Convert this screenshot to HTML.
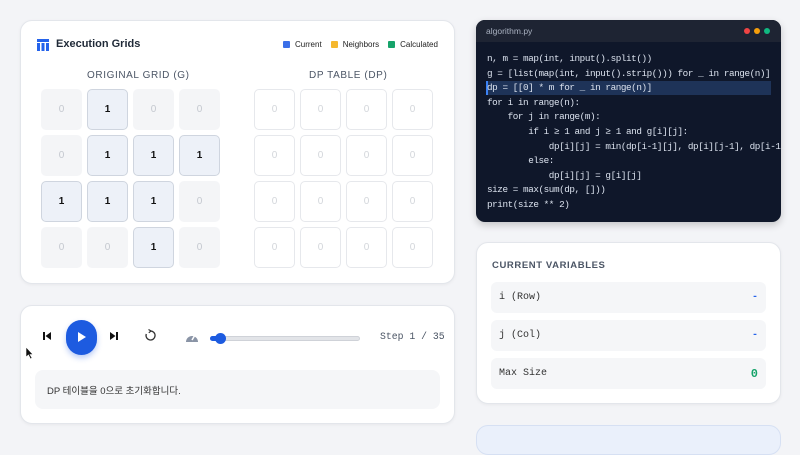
<!DOCTYPE html>
<html><head><meta charset="utf-8"><style>
*{box-sizing:border-box;margin:0;padding:0}
body{width:800px;height:435px;overflow:hidden;background:#f3f4f7;font-family:"Liberation Sans","Noto Sans CJK KR",sans-serif;position:relative}
.card{position:absolute;background:#fff;border:1px solid #e3e6eb;border-radius:12px;box-shadow:0 1px 3px rgba(0,0,0,.05)}
.cell{position:absolute;width:41px;height:41px;border-radius:5px;display:flex;align-items:center;justify-content:center;font-size:10px;font-weight:bold}
.z{background:#f4f5f7;color:#c4c8cf;font-weight:normal}
.o{background:#edf1f8;border:1px solid #cfd5df;color:#111}
.d{background:#fff;border:1px solid #e6e8ec;color:#d3d6db;font-weight:normal}
.lbl{position:absolute;font-size:10px;letter-spacing:.6px;color:#4b5565;top:70px}
.code{position:absolute;left:476px;top:20px;width:305px;height:202px;background:#0f172a;border-radius:9px;overflow:hidden;box-shadow:0 3px 8px rgba(0,0,0,.2)}
.code pre{position:absolute;left:11px;top:32px;font-family:"Liberation Mono",monospace;font-size:9.3px;letter-spacing:-0.43px;line-height:14.6px;color:#dbe2ee;white-space:pre}
.var{position:absolute;left:491px;width:275px;height:31px;background:#f5f6f8;border-radius:6px;font-family:"Liberation Mono",monospace;font-size:10px;color:#333;padding:0 8px;display:flex;align-items:center;justify-content:space-between}
</style></head><body>
<div class="card" style="left:20px;top:20px;width:435px;height:264px"></div>
<svg style="position:absolute;left:37px;top:39px" width="12" height="12" viewBox="0 0 12 12"><rect x="0" y="0" width="12" height="3" fill="#2563eb"/><rect x="0" y="4" width="3" height="8" fill="#2563eb"/><rect x="4.5" y="4" width="3" height="8" fill="#2563eb"/><rect x="9" y="4" width="3" height="8" fill="#2563eb"/></svg>
<div style="position:absolute;left:56px;top:38px;font-size:11px;font-weight:bold;color:#1f2937">Execution Grids</div>
<div style="position:absolute;left:283px;top:40px;font-size:8px;color:#222;display:flex;gap:5px;align-items:center">
<span style="width:7px;height:7px;background:#3b6fe8;border-radius:1px;display:inline-block"></span>Current
<span style="width:7px;height:7px;background:#f5b82e;border-radius:1px;display:inline-block;margin-left:4px"></span>Neighbors
<span style="width:7px;height:7px;background:#16a36a;border-radius:1px;display:inline-block;margin-left:4px"></span>Calculated</div>
<div class="lbl" style="left:87px">ORIGINAL GRID (G)</div>
<div class="lbl" style="left:309px">DP TABLE (DP)</div>
<div class="cell z" style="left:41px;top:89px">0</div><div class="cell o" style="left:87px;top:89px">1</div><div class="cell z" style="left:133px;top:89px">0</div><div class="cell z" style="left:179px;top:89px">0</div>
<div class="cell z" style="left:41px;top:135px">0</div><div class="cell o" style="left:87px;top:135px">1</div><div class="cell o" style="left:133px;top:135px">1</div><div class="cell o" style="left:179px;top:135px">1</div>
<div class="cell o" style="left:41px;top:181px">1</div><div class="cell o" style="left:87px;top:181px">1</div><div class="cell o" style="left:133px;top:181px">1</div><div class="cell z" style="left:179px;top:181px">0</div>
<div class="cell z" style="left:41px;top:227px">0</div><div class="cell z" style="left:87px;top:227px">0</div><div class="cell o" style="left:133px;top:227px">1</div><div class="cell z" style="left:179px;top:227px">0</div>
<div class="cell d" style="left:254px;top:89px">0</div><div class="cell d" style="left:300px;top:89px">0</div><div class="cell d" style="left:346px;top:89px">0</div><div class="cell d" style="left:392px;top:89px">0</div>
<div class="cell d" style="left:254px;top:135px">0</div><div class="cell d" style="left:300px;top:135px">0</div><div class="cell d" style="left:346px;top:135px">0</div><div class="cell d" style="left:392px;top:135px">0</div>
<div class="cell d" style="left:254px;top:181px">0</div><div class="cell d" style="left:300px;top:181px">0</div><div class="cell d" style="left:346px;top:181px">0</div><div class="cell d" style="left:392px;top:181px">0</div>
<div class="cell d" style="left:254px;top:227px">0</div><div class="cell d" style="left:300px;top:227px">0</div><div class="cell d" style="left:346px;top:227px">0</div><div class="cell d" style="left:392px;top:227px">0</div>

<div class="code">
<div style="position:absolute;left:0;top:0;width:305px;height:22px;background:#1e2433"></div>
<div style="position:absolute;left:10px;top:6px;font-size:8.5px;color:#a9b1c0">algorithm.py</div>
<div style="position:absolute;left:268px;top:8px;width:6px;height:6px;border-radius:50%;background:#ef4444"></div>
<div style="position:absolute;left:278px;top:8px;width:6px;height:6px;border-radius:50%;background:#f59e0b"></div>
<div style="position:absolute;left:288px;top:8px;width:6px;height:6px;border-radius:50%;background:#10b981"></div>
<div style="position:absolute;left:10px;top:61px;width:285px;height:14px;background:#1e3358;border-left:2px solid #3b82f6"></div>
<pre>n, m = map(int, input().split())
g = [list(map(int, input().strip())) for _ in range(n)]
dp = [[0] * m for _ in range(n)]
for i in range(n):
    for j in range(m):
        if i ≥ 1 and j ≥ 1 and g[i][j]:
            dp[i][j] = min(dp[i-1][j], dp[i][j-1], dp[i-1][j-1]) + 1
        else:
            dp[i][j] = g[i][j]
size = max(sum(dp, []))
print(size ** 2)</pre>
</div>

<div class="card" style="left:476px;top:242px;width:305px;height:162px"></div>
<div style="position:absolute;left:492px;top:260px;font-size:9.5px;font-weight:bold;letter-spacing:.6px;color:#4b5565">CURRENT VARIABLES</div>
<div class="var" style="top:282px"><span>i (Row)</span><span style="color:#2563eb;font-weight:bold">-</span></div>
<div class="var" style="top:320px"><span>j (Col)</span><span style="color:#2563eb;font-weight:bold">-</span></div>
<div class="var" style="top:358px"><span>Max Size</span><span style="color:#16a36a;font-weight:bold;font-size:12px">0</span></div>
<div style="position:absolute;left:476px;top:425px;width:305px;height:30px;background:#eaf0fb;border:1px solid #d6e0f3;border-radius:12px"></div>

<div class="card" style="left:20px;top:305px;width:435px;height:119px"></div>
<svg style="position:absolute;left:42px;top:331px" width="10" height="10" viewBox="0 0 10 10"><rect x="1" y="1" width="2" height="8" fill="#111"/><path d="M9 1 L3.5 5 L9 9Z" fill="#111"/></svg>
<div style="position:absolute;left:66px;top:320px;width:31px;height:35px;border-radius:16px;background:#1d5be0;box-shadow:0 3px 6px rgba(29,91,224,.3)"></div>
<svg style="position:absolute;left:77px;top:332px" width="10" height="10" viewBox="0 0 10 10"><path d="M1 0 L9 5 L1 10Z" fill="#fff"/></svg>
<svg style="position:absolute;left:109px;top:331px" width="10" height="10" viewBox="0 0 10 10"><path d="M1 1 L6.5 5 L1 9Z" fill="#111"/><rect x="7" y="1" width="2" height="8" fill="#111"/></svg>
<svg style="position:absolute;left:144px;top:329px" width="13" height="13" viewBox="0 0 13 13"><path d="M6.5 2 A4.5 4.5 0 1 1 2.3 5" fill="none" stroke="#333" stroke-width="1.3"/><path d="M4.5 0.5 L7 2 L4.8 3.8" fill="none" stroke="#333" stroke-width="1.2"/></svg>
<svg style="position:absolute;left:185px;top:331px" width="14" height="12" viewBox="0 0 14 12"><path d="M1 11 A6 6 0 1 1 13 11Z" fill="#8a94a6"/><path d="M7 9 L10 4" stroke="#fff" stroke-width="1.5"/></svg>
<div style="position:absolute;left:210px;top:336px;width:150px;height:5px;background:#e2e4e8;border:1px solid #cfd2d8;border-radius:3px"></div>
<div style="position:absolute;left:210px;top:336px;width:10px;height:5px;background:#1d5be0;border-radius:3px"></div>
<div style="position:absolute;left:215px;top:333px;width:11px;height:11px;background:#1d5be0;border-radius:50%"></div>
<div style="position:absolute;left:380px;top:331px;font-family:'Liberation Mono',monospace;font-size:9.8px;color:#4b5565">Step 1 / 35</div>
<svg style="position:absolute;left:25px;top:347px" width="9" height="13" viewBox="0 0 9 13"><path d="M1 0 L1 10 L3.5 8 L5.5 12 L7 11 L5 7.5 L8 7.5Z" fill="#111" stroke="#fff" stroke-width=".6"/></svg>
<div style="position:absolute;left:35px;top:370px;width:405px;height:39px;background:#f5f6f8;border-radius:8px"></div>
<div style="position:absolute;left:47px;top:383px;font-size:9.5px;color:#333">DP 테이블을 0으로 초기화합니다.</div>
</body></html>
